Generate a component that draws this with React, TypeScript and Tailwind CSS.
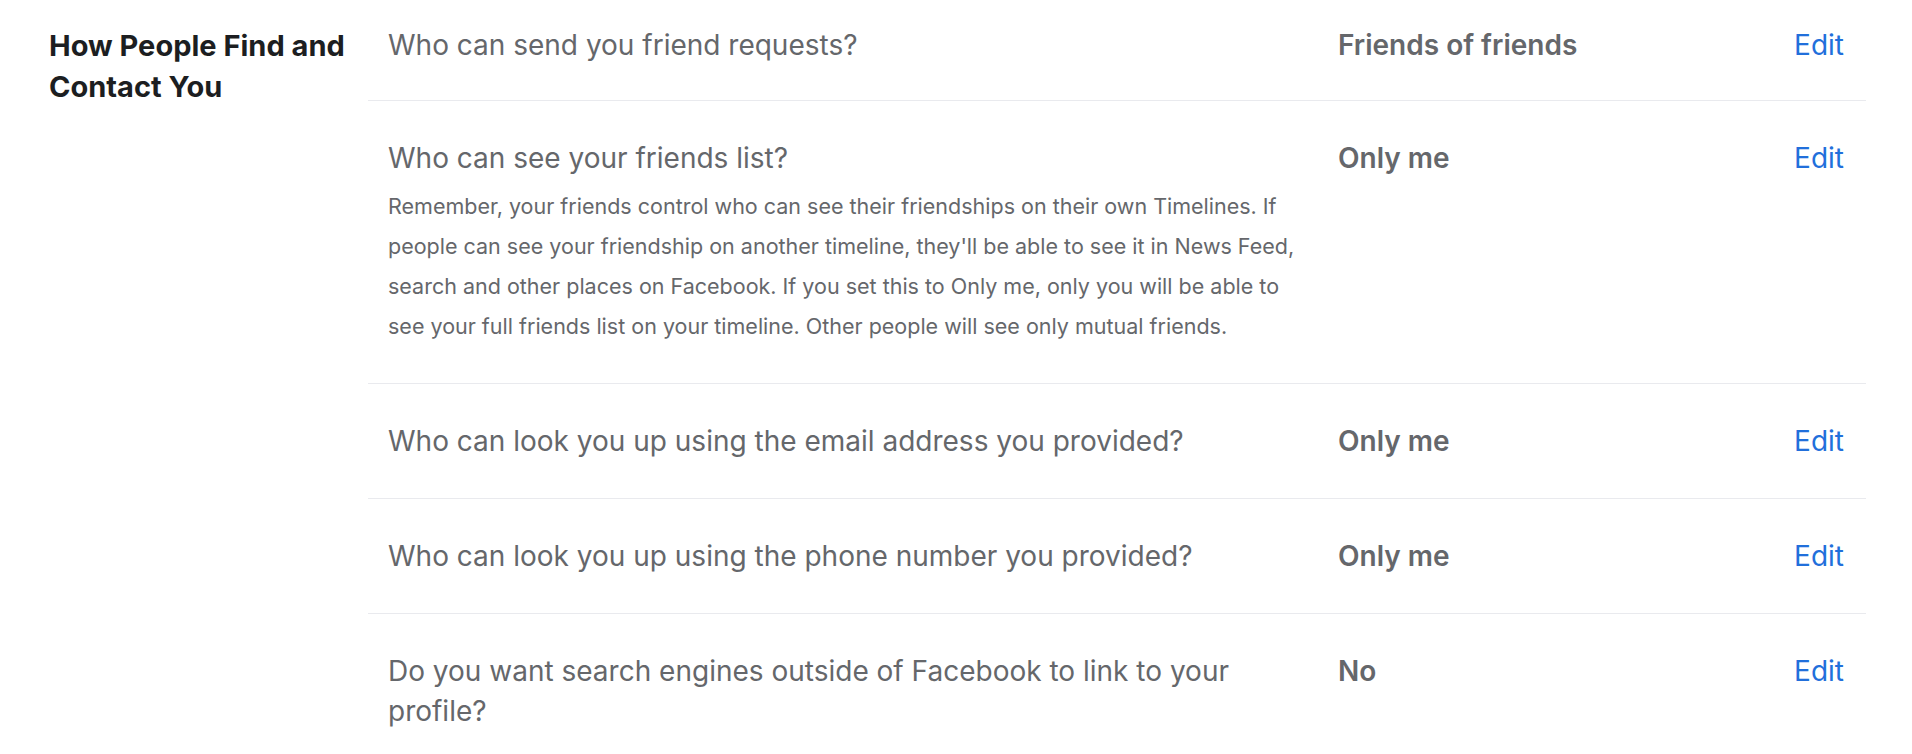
const rows: { q: string; value: string; desc?: string }[] = [
  { q: "Who can send you friend requests?", value: "Friends of friends" },
  {
    q: "Who can see your friends list?",
    value: "Only me",
    desc: "Remember, your friends control who can see their friendships on their own Timelines. If people can see your friendship on another timeline, they'll be able to see it in News Feed, search and other places on Facebook. If you set this to Only me, only you will be able to see your full friends list on your timeline. Other people will see only mutual friends.",
  },
  { q: "Who can look you up using the email address you provided?", value: "Only me" },
  { q: "Who can look you up using the phone number you provided?", value: "Only me" },
  { q: "Do you want search engines outside of Facebook to link to your profile?", value: "No" },
];

function SettingRow({
  q,
  value,
  desc,
  first,
  last,
}: {
  q: string;
  value: string;
  desc?: string;
  first?: boolean;
  last?: boolean;
}) {
  return (
    <div
      className={`grid grid-cols-[922px_1fr_auto] gap-x-[28px] pl-[20px] pr-[22px] ${
        first ? "pt-[25px] pb-[35px]" : "py-[37px]"
      } ${last ? "" : "border-b border-[#e9eaee]"}`}
    >
      <div>
        <div className="text-[28px] leading-[40px] text-[#65676b]">{q}</div>
        {desc && (
          <p className="mt-2 text-[21.5px] leading-[40px] text-[#65676b]">{desc}</p>
        )}
      </div>
      <div className="text-[28px] leading-[40px] font-semibold text-[#65676b]">{value}</div>
      <a href="#" className="text-[28px] leading-[40px] text-[#216fdb]">
        Edit
      </a>
    </div>
  );
}

export default function App() {
  return (
    <div className="flex min-h-screen bg-white font-['Inter','Liberation_Sans',sans-serif] antialiased">
      <div className="w-[368px] shrink-0 pl-[49px] pr-[16px] pt-[25px]">
        <h2 className="text-[29px] leading-[41px] font-bold text-[#1c1e21]">
          How People Find and Contact You
        </h2>
      </div>
      <div className="w-[1498px]">
        {rows.map((r, i) => (
          <SettingRow key={r.q} {...r} first={i === 0} last={i === rows.length - 1} />
        ))}
      </div>
    </div>
  );
}
